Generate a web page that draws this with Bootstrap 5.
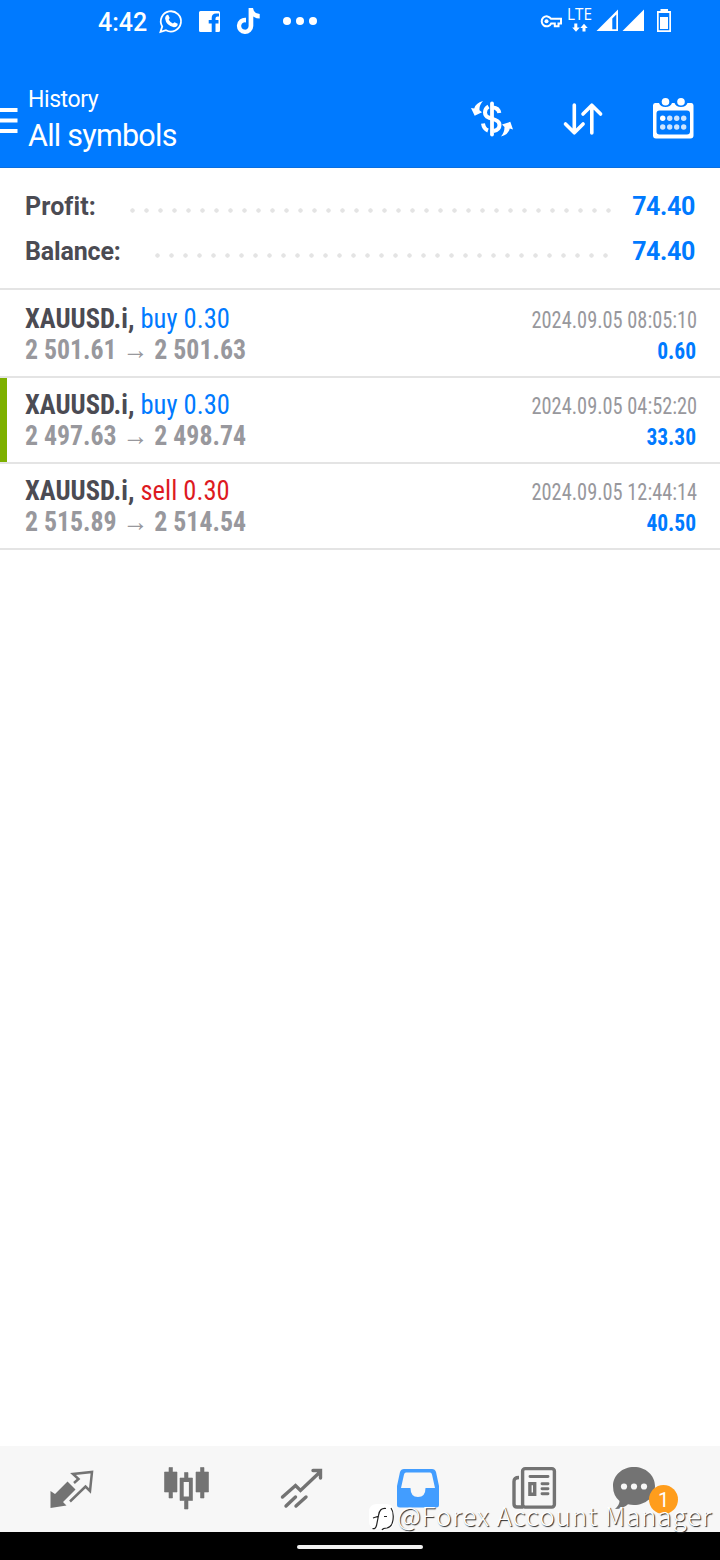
<!DOCTYPE html>
<html lang="en">
<head>
<meta charset="utf-8">
<meta name="viewport" content="width=device-width, initial-scale=1">
<title>History</title>
<link href="https://cdn.jsdelivr.net/npm/bootstrap@5.3.0/dist/css/bootstrap.min.css" rel="stylesheet">
<style>
body{font-family:Roboto,"Liberation Sans",sans-serif;width:720px;height:1560px;overflow:hidden;color:#4b4b53}
svg{display:block;flex:none}
.topbar{background:#007aff;height:168px;border-bottom:1px solid #0a6fe0}
.statusbar{height:44px;padding-left:98px;padding-right:47px}
.clock{font-size:25px;font-weight:500;line-height:46px;width:49px;white-space:nowrap}
.titlebar{height:100px;margin-top:21px;padding-right:26px}
.crumb{font-size:23px;line-height:28px;margin-left:10px;padding-top:21px;white-space:nowrap;letter-spacing:-.42px}
.crumb-main{font-size:30.5px;line-height:36px;margin-top:4px;letter-spacing:-.75px}
.totals{height:122px;padding:16px 25px 0;border-bottom:2px solid #e4e4e4}
.total-line{height:45px;font-size:25px;font-weight:700;line-height:45px}
.total-label{letter-spacing:.12px;font-variant-ligatures:none}
.total-label.tight{letter-spacing:-.15px}
.total-line .blue{letter-spacing:-.35px}
.dots{height:5px;margin:8px 20px 0 34.500px;background:radial-gradient(circle at 2.500px 2.500px,#e4e4e4 1.900px,transparent 2.500px) 0 0/14px 5px repeat-x}
.blue{color:#007aff}.red{color:#dd1a1f}
.deal{height:86px;padding:11px 24px 0 25px;border-bottom:2px solid #e4e4e4;font-family:"Roboto Condensed",Roboto,sans-serif;font-stretch:75%}
.deal:first-child{height:88px;padding-top:13px}
.deal.marked{background:linear-gradient(#7db000,#7db000) 0 0/7px 100% no-repeat padding-box}
.deal-l,.deal-r{white-space:nowrap;height:31px;line-height:31px}
.deal-l{font-size:27.5px;transform-origin:0 50%;transform:scaleX(.965)}
.deal-l.price{transform:scaleX(.938)}
.deal-r{font-size:23px;text-align:right;margin-top:2px;margin-bottom:-2px;transform-origin:100% 50%;transform:scaleX(.935)}
.deal-r.stamp{transform:translateX(1px) scaleX(.885)}
.muted{color:#98989d}
.tabs{height:86px;background:#f7f7f7;color:#737373}
.sysnav{height:28px;background:#000;padding-top:13px}
.pill{width:126px;height:4px;border-radius:2px;background:#f1f1f1}
.count{left:649px;top:39px;width:29px;height:29px;border-radius:50%;background:#ff9d1c;color:#fff;font-size:20px;line-height:30px}
.wm{left:368px;top:1498px;z-index:5;color:#fff}
.wm-text{font-family:"Noto Sans CJK SC",sans-serif;font-weight:300;font-size:26px;line-height:33px;letter-spacing:.88px;white-space:nowrap;text-shadow:1px 1px 1px #222}
</style>
</head>
<body class="bg-white position-relative d-flex flex-column">
<header class="topbar text-white">
  <div class="statusbar d-flex justify-content-between">
    <div class="d-flex">
      <span class="clock">4:42</span>
      <svg width="175" height="44" viewBox="147 0 175 44" fill="#fff">
        <path d="M160.500 31.800l1.700-5.300a10.100 10.100 0 1 1 3.800 3.700z" fill="none" stroke="#fff" stroke-width="1.800"/>
        <path d="M166.300 15.500q1-1.200 2-.4l1.400 3-1 1.700q1.600 2.700 4.200 3.800l1.600-1.400 3.200 1.500q.2 3.400-3.800 3.500-7.800-1.500-8.800-8.700 0-1.800 1.200-3z"/>
        <path d="M200.500 11h18a1.500 1.500 0 0 1 1.500 1.500v18a1.500 1.500 0 0 1-1.500 1.500H215.500v-8.500h3v-3.500h-3v-1.500q0-2 2-2h1.500v-3h-3q-4.300 0-4.300 4.500v2h-3v3.500h3V32H200.500a1.500 1.500 0 0 1-1.500-1.500v-18a1.500 1.500 0 0 1 1.500-1.500z"/>
        <path d="M248.600 8h4.400q.6 5.700 6.700 6v4.500q-3.700 0-6.400-2v9.500a8.200 8.200 0 1 1-7.300-8.300v4.700a3.700 3.700 0 1 0 2.600 3.500z"/>
        <circle cx="287" cy="21" r="4"/><circle cx="300" cy="21" r="4"/><circle cx="313" cy="21" r="4"/>
      </svg>
    </div>
    <svg width="135" height="44" viewBox="538 0 135 44" fill="#fff">
      <path d="M551 18.800h10v4.700h-2.500v2.800h-3.700v-2.800h-3.600a5 5 0 1 1-.2-4.700z" fill="none" stroke="#fff" stroke-width="2"/><circle cx="546.500" cy="21.200" r="2"/>
      <text x="567" y="20" font-size="15.500" textLength="25" lengthAdjust="spacingAndGlyphs" font-family="Open Sans">LTE</text>
      <path d="M574.300 23.500h3v4h2.500L576 31.700l-3.800-4.200h2.100zM582.500 31.500h3V28h2.200L584 23.800l-3.700 4.200h2.200z"/>
      <path fill-rule="evenodd" d="M618 9.500V31H596.500zM612.300 18.500v10.700h4V14.500z"/><path d="M644 9.500V31H622.500z"/>
      <path fill-rule="evenodd" d="M660.500 9h7.500v2h3v21h-14V11h3.500zM658.700 13v17.300h10.600V13z"/><path d="M660 17h8v12h-8z"/>
    </svg>
  </div>
  <div class="titlebar d-flex justify-content-between">
    <div class="d-flex">
      <svg width="18" height="100" viewBox="0 65 18 100" stroke="#fff" stroke-width="4"><path d="M0 110h17.500M0 120.500h17.500M0 131h17.500"/></svg>
      <div class="crumb"><div>History</div><div class="crumb-main">All symbols</div></div>
    </div>
    <svg width="226" height="100" viewBox="468 65 226 100" fill="#fff">
      <g fill="none" stroke="#fff" stroke-width="4"><path d="M492 103.500v31" stroke-width="3.800" stroke-linecap="round"/><path d="M499.300 113q-.8-5-6.300-5.500M488.500 106.500q-3.500 2-3.500 6 0 3.500 3.500 5 3 1 7 2.500 4 1.500 4 5 0 5-6 6M483 123.500q.8 5.500 5 7"/></g>
      <path d="M483 101q-7.500 2-8.800 7.500l-3.200-.5 3.700 7.700 7.300-3.500-2.500-2q-.5-5 3.500-9.200zM501 136.500q7.500-2 8.800-8l3.200 1-2.700-7.700-8.300 2.700 2.500 2.500q0 5.500-3.500 9.500z"/>
      <path d="M574.300 105v27.500M565.500 124l8.800 8.800 8.800-8.800M591.800 133v-27.500M583 114l8.800-8.800 8.800 8.800" fill="none" stroke="#fff" stroke-width="3.600" stroke-linecap="round" stroke-linejoin="round"/>
      <path fill-rule="evenodd" d="M655 103h4q1.500 4 6.500 4t6.500-4h2.500q1.500 4 6.500 4t6.500-4h4q2 0 2 2.500V135.500q0 3-3 3H656q-3 0-3-3V105.500q0-2.500 2-2.500zM659.500 110.500q-3 0-3 3v18q0 3 3 3h27.500q3 0 3-3v-18q0-3-3-3z"/>
      <circle cx="665.500" cy="101.700" r="3.800"/><circle cx="681" cy="101.700" r="3.800"/>
      <circle cx="662.700" cy="118.200" r="2.700"/>
      <g opacity=".8"><circle cx="669.700" cy="118.200" r="2.700"/><circle cx="676.700" cy="118.200" r="2.700"/><circle cx="683.700" cy="118.200" r="2.700"/><circle cx="662.700" cy="127" r="2.700"/><circle cx="669.700" cy="127" r="2.700"/><circle cx="676.700" cy="127" r="2.700"/><circle cx="683.700" cy="127" r="2.700"/></g>
    </svg>
  </div>
</header>
<section class="totals">
  <div class="total-line d-flex align-items-center"><span class="total-label">Profit:</span><span class="dots flex-grow-1"></span><span class="blue">74.40</span></div>
  <div class="total-line d-flex align-items-center"><span class="total-label tight">Balance:</span><span class="dots flex-grow-1"></span><span class="blue">74.40</span></div>
</section>
<main class="flex-grow-1">
  <div class="deal d-flex justify-content-between">
    <div><div class="deal-l"><b>XAUUSD.i,</b> <span class="blue">buy 0.30</span></div><div class="deal-l price muted fw-bold">2 501.61 → 2 501.63</div></div>
    <div><div class="deal-r stamp muted">2024.09.05 08:05:10</div><div class="deal-r blue fw-bold">0.60</div></div>
  </div>
  <div class="deal marked d-flex justify-content-between">
    <div><div class="deal-l"><b>XAUUSD.i,</b> <span class="blue">buy 0.30</span></div><div class="deal-l price muted fw-bold">2 497.63 → 2 498.74</div></div>
    <div><div class="deal-r stamp muted">2024.09.05 04:52:20</div><div class="deal-r blue fw-bold">33.30</div></div>
  </div>
  <div class="deal d-flex justify-content-between">
    <div><div class="deal-l"><b>XAUUSD.i,</b> <span class="red">sell 0.30</span></div><div class="deal-l price muted fw-bold">2 515.89 → 2 514.54</div></div>
    <div><div class="deal-r stamp muted">2024.09.05 12:44:14</div><div class="deal-r blue fw-bold">40.50</div></div>
  </div>
</main>
<nav class="tabs position-relative">
  <svg width="720" height="86" viewBox="0 1446 720 86" fill="currentColor">
    <path d="M50.500 1491l4.500 3 12.500-12.500 8 8L63 1502l3.500 3.500L50.500 1508z"/>
    <path d="M74 1483l4.500-4-5.500-5 19-2-2 19-4.500-4.500L70 1501.500" fill="none" stroke="currentColor" stroke-width="2.500"/>
    <path d="M169 1467.500h3.500v4.500h4.500v20h-4.500v6h-3.500v-6h-4.500v-20h4.500zM200.500 1467.500h3.500v4.500h4.500v20H204v6h-3.500v-6H196v-20h4.500zM184.500 1472.500h3.500v5.500h4.500v22.500H188v8.500h-3.500v-8.500H180V1478h4.500z" stroke="currentColor" stroke-width=".6"/><path fill="#f7f7f7" d="M183.700 1482h5.200v14.500h-5.200z"/>
    <path d="M282.500 1497l13-11.500 5 5L320 1472M313 1470.500h7.500v7.500M286 1506l9.500-9M296 1506l10-9" fill="none" stroke="currentColor" stroke-width="3.400" stroke-linecap="round"/>
    <path fill="#429dff" fill-rule="evenodd" d="M404 1469h28q3 0 4 3l3 14v19q0 2.500-3 2.500h-36q-3 0-3-2.500v-19l3-14q1-3 4-3zM406 1472.500q-1.500 0-2 2l-3 13.500h9.500q0 9 7.500 9t7.500-9H435l-3-13.500q-.5-2-2-2z"/>
    <g fill="none" stroke="currentColor" stroke-width="3.400"><rect x="522.600" y="1468.600" width="31.800" height="38.500" rx="2.500"/><path d="M519 1477.500q-5 0-5 4v22.500q0 3 3 3h6"/><path d="M530 1476.500h18M542 1483.700h6M542 1488.700h6M542 1493.700h6" stroke-width="2.900" stroke-linecap="round"/><path d="M529.900 1483.600h4.800v10.600h-4.800z"/></g>
    <path d="M634 1467c11.500 0 21 8 21 19s-9.500 19-21 19q-3 0-6-.8-5 4.800-13 4.800 4.500-4 4.500-8-6.500-5.500-6.500-15c0-11 9.500-19 21-19z"/><g fill="#f7f7f7"><circle cx="624" cy="1486.500" r="3.100"/><circle cx="634" cy="1486.500" r="3.100"/><circle cx="644" cy="1486.500" r="3.100"/></g>
  </svg>
  <span class="count position-absolute text-center">1</span>
</nav>
<div class="sysnav"><div class="pill mx-auto"></div></div>
<div class="wm position-absolute d-flex">
  <svg width="29" height="38" viewBox="368 1498 29 38"><path d="M377 1504h9q8 0 8 8v9q0 8-8 8l-4 2.500v-2.500h-5q-8 0-8-8v-9q0-8 8-8z" fill="#fff"/><path d="M386 1508.500q-6.500-1-7.500 7l-2 10q-1 4-4 3M373 1518l6-2M384 1516.500h3M391 1508q3 4 2 12-1 7-6 8-4 0-5 2" fill="none" stroke="#222" stroke-width="1.200"/></svg>
  <span class="wm-text">@Forex Account Manager</span>
</div>
<script src="https://cdn.jsdelivr.net/npm/bootstrap@5.3.0/dist/js/bootstrap.bundle.min.js"></script>
</body>
</html>
